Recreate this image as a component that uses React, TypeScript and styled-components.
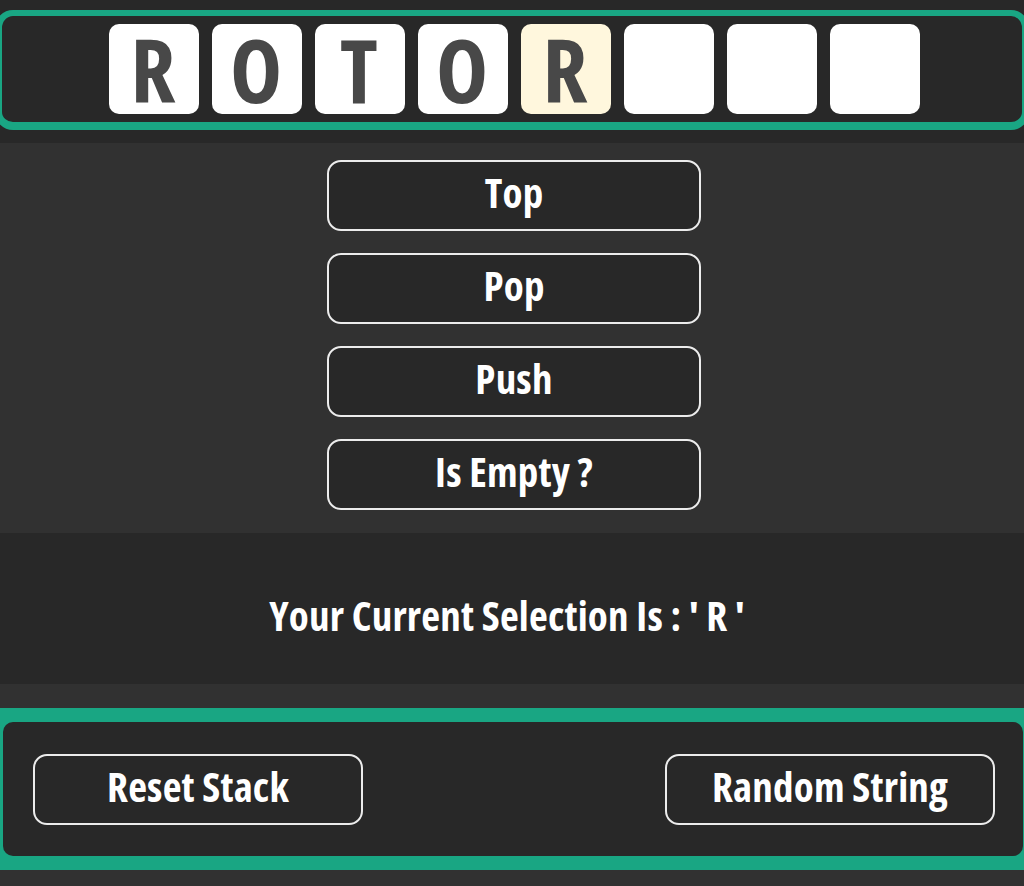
import styled, { createGlobalStyle } from "styled-components";

const word = ["R", "O", "T", "O", "R", "", "", ""];
const current = 4;

function App() {
  return (
    <>
      <GlobalStyle />
      <Header>
        <WordFrame>
          <TileRow>
            {word.map((letter, i) => (
              <Tile key={i} $active={i === current}>
                {letter}
              </Tile>
            ))}
          </TileRow>
        </WordFrame>
      </Header>
      <Controls>
        <ActionButton>Top</ActionButton>
        <ActionButton>Pop</ActionButton>
        <ActionButton>Push</ActionButton>
        <ActionButton>Is Empty ?</ActionButton>
      </Controls>
      <SelectionPanel>
        <Selection>Your Current Selection Is : ' R '</Selection>
      </SelectionPanel>
      <Footer>
        <FooterFrame>
          <FooterInner>
            <WideButton>Reset Stack</WideButton>
            <WideButton>Random String</WideButton>
          </FooterInner>
        </FooterFrame>
      </Footer>
    </>
  );
}

const GlobalStyle = createGlobalStyle`
  body {
    margin: 0;
    background: #313131;
    font-family: "Open Sans", "Noto Sans", sans-serif;
    font-stretch: 75%;
  }
`;

const Header = styled.header`
  background: #282828;
  padding: 10px 0 13px;
  overflow: hidden;
`;

const WordFrame = styled.div`
  margin: 0 -5px;
  border: 7px solid #19a683;
  border-width: 6px 7px 8px;
  border-radius: 18px;
  background: #282828;
`;

const TileRow = styled.div`
  display: flex;
  justify-content: center;
  gap: 13px;
  padding: 8px 0 8px 4px;
`;

const Tile = styled.div<{ $active?: boolean }>`
  width: 90px;
  height: 90px;
  border-radius: 10px;
  background: ${(p) => (p.$active ? "#fff7dd" : "#ffffff")};
  color: #484848;
  font-size: 88px;
  font-weight: 700;
  letter-spacing: 1px;
  display: flex;
  align-items: center;
  justify-content: center;
  line-height: 1;
`;

const Controls = styled.section`
  display: flex;
  flex-direction: column;
  align-items: center;
  gap: 22px;
  padding: 17px 0 23px 4px;
  background: #313131;
`;

const ActionButton = styled.button`
  width: 374px;
  height: 71px;
  border: 2px solid #ececec;
  border-radius: 14px;
  background: #282828;
  color: #ffffff;
  font-family: inherit;
  font-stretch: 75%;
  font-size: 41px;
  font-weight: 700;
  letter-spacing: 0.2px;
  padding: 0 0 8px;
`;

const SelectionPanel = styled.section`
  height: 151px;
  background: #282828;
  display: flex;
  align-items: center;
  justify-content: center;
`;

const Selection = styled.h2`
  margin: 12px 0 0 -10px;
  color: #ffffff;
  font-size: 41px;
  font-weight: 700;
  letter-spacing: 0.2px;
`;

const Footer = styled.footer`
  padding: 24px 0 16px;
`;

const FooterFrame = styled.div`
  background: #19a683;
  padding: 14px 1px 14px 3px;
`;

const FooterInner = styled.div`
  display: flex;
  justify-content: space-between;
  align-items: center;
  background: #282828;
  border-radius: 10px;
  padding: 32px 28px 31px 30px;
`;

const WideButton = styled(ActionButton)`
  width: 330px;
`;

export default App;
